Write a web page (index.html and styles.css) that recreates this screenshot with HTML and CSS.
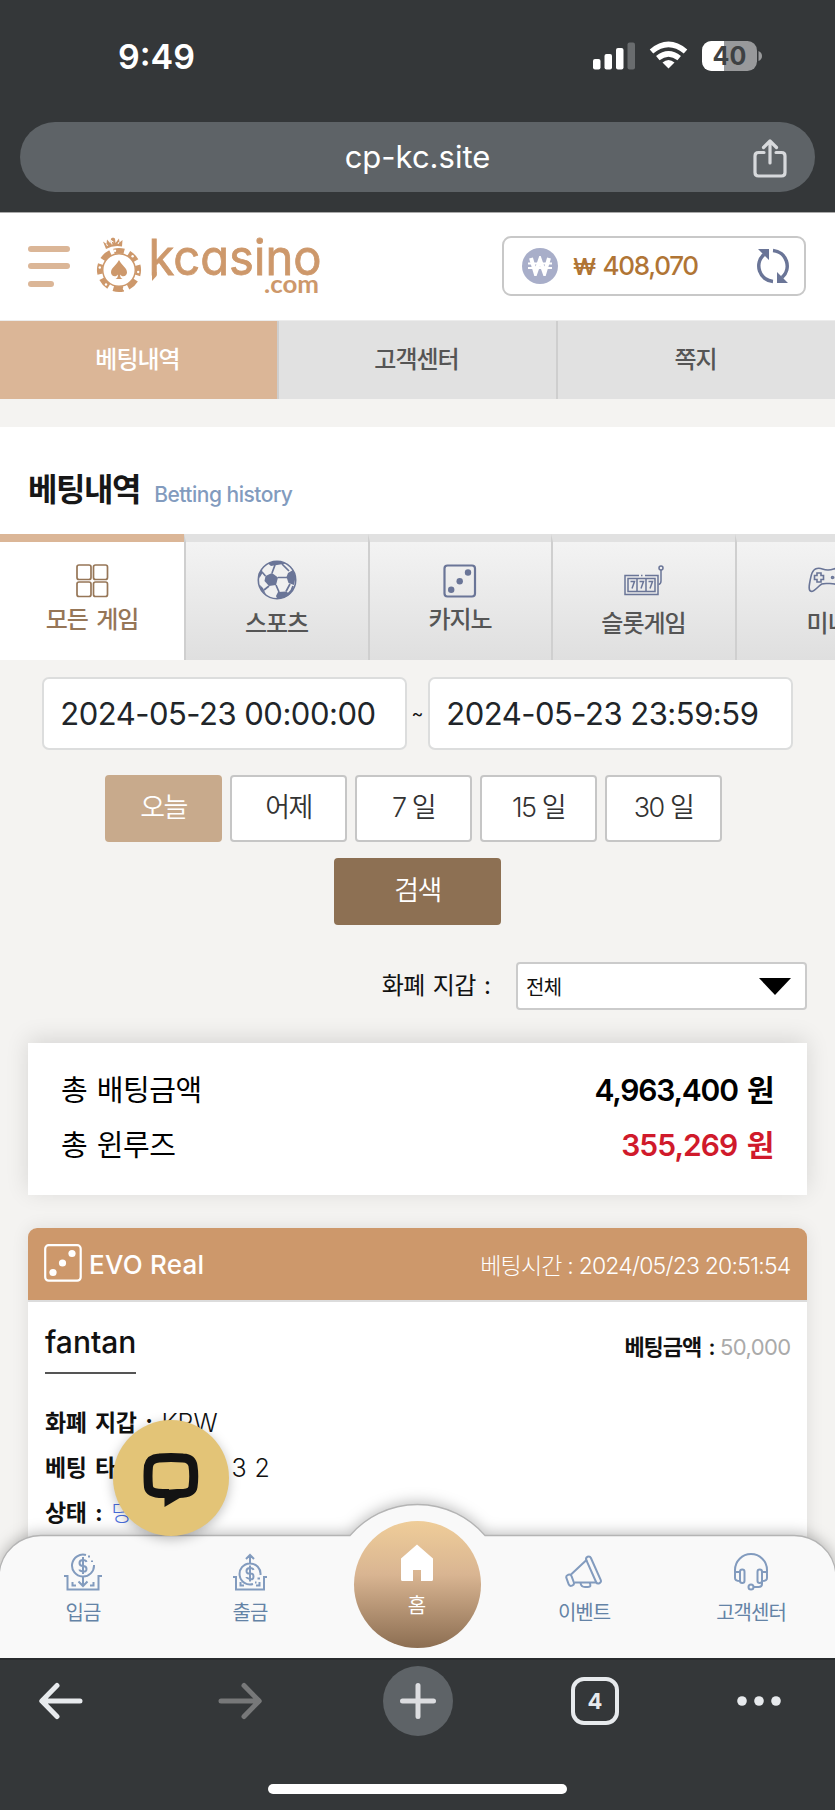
FILE: index.html
```html
<!DOCTYPE html>
<html lang="ko">
<head>
<meta charset="utf-8">
<title>베팅내역</title>
<link rel="stylesheet" href="styles.css">
</head>
<body>
<div class="phone">
  <header class="browser-top">
    <div class="status">
      <span class="clock">9:49</span>
      <svg class="status-icons" width="170" height="32" viewBox="0 0 170 32">
        <g fill="#fff">
          <rect x="0" y="19" width="7.5" height="10.5" rx="2"/><rect x="11.500" y="14" width="7.500" height="15.500" rx="2"/><rect x="23" y="8" width="7.500" height="21.500" rx="2"/>
          <rect x="34.500" y="2.500" width="7.500" height="27" rx="2" fill="#696c6e"/>
        </g>
        <g fill="none" stroke="#fff" stroke-width="5.500"><path d="M58.500 11.500Q75.500-2.700 92.500 11.500"/><path d="M64.800 18.200Q75.500 9.500 86.200 18.200"/></g>
        <path d="M75.500 28.500L69.500 22.500Q75.500 17.500 81.500 22.500Z" fill="#fff"/>
        <rect x="109" y="1" width="55" height="30" rx="9.500" fill="#98999b"/>
        <path d="M131 1H118.500A9.500 9.500 0 0 0 109 10.500V21.500A9.500 9.500 0 0 0 118.500 31H131Z" fill="#fff"/>
        <path d="M165.500 11q3.500 1.500 3.500 5t-3.500 5Z" fill="#98999b"/>
        <text x="136.500" y="25" class="battery-text">40</text>
      </svg>
    </div>
    <div class="address">
      <span>cp-kc.site</span>
      <svg class="share" width="34" height="40" viewBox="0 0 34 40" fill="none" stroke="#d7d9dc" stroke-width="3.200" stroke-linecap="round" stroke-linejoin="round"><path d="M11 13.500H5.500Q2 13.500 2 17V33.500Q2 37 5.500 37H28.500Q32 37 32 33.500V17Q32 13.500 28.500 13.500H23M17 24V2.500M10.500 8.500L17 2L23.500 8.500"/></svg>
    </div>
  </header>

  <main class="screen">
    <div class="site-head">
      <div class="burger"><i></i><i></i><i></i></div>
      <svg class="logo" width="230" height="62" viewBox="0 0 230 62" fill="#cd986b">
        <circle cx="24" cy="33" r="19.300" fill="none" stroke="#cd986b" stroke-width="5.500" stroke-dasharray="10.200 5" transform="rotate(-105 24 33)"/>
        <circle cx="24" cy="33" r="16.300" fill="none" stroke="#cd986b" stroke-width="1.500"/>
        <g fill="#fff"><circle cx="20" cy="13.800" r="1.200"/><circle cx="37.600" cy="19.200" r="1.200"/><circle cx="43.200" cy="35" r="1.200"/><circle cx="29" cy="51.800" r="1.200"/><circle cx="11" cy="47.500" r="1.200"/><circle cx="4.800" cy="30.500" r="1.200"/></g>
        <path d="M24 23C21 29 16 30.500 16 35.500C16 39.500 21 40.500 23 37.500Q23 41 20.500 42H27.500Q25 41 25 37.500C27 40.500 32 39.500 32 35.500C32 30.500 27 29 24 23Z"/>
        <path d="M11 12L8 4.500L11.500 7L12 2.500L15.500 6.500L16 1.500L18 0.500L20 1.500L20.500 6L24 1.500L24.500 5.500L27.500 3L27 9.500Q18 8 11 12Z"/>
        <path d="M12.500 9L11.500 7M17 7.500L16 3.500L18.500 5M23 7L24 5" stroke="#fff" stroke-width="1" fill="none"/>
        <path d="M57 35H61.500V39L57 44Z"/>
        <text x="53.500" y="38" class="word" textLength="173" lengthAdjust="spacingAndGlyphs">kcasino</text>
        <text x="169" y="56" class="dotcom" textLength="55" lengthAdjust="spacingAndGlyphs">.com</text>
      </svg>
      <div class="balance">
        <span class="coin"><svg width="24" height="20" viewBox="0 0 24 20" fill="none" stroke="#fff"><path d="M3 2L7.500 17L12 4L16.500 17L21 2" stroke-width="4"/><path d="M0 7.500H24M0 12H24" stroke-width="2"/></svg></span>
        <span class="amount"><span class="won">₩</span> 408,070</span>
        <svg class="reload" width="34" height="36" viewBox="0 0 34 36"><g fill="none" stroke="#6a7597" stroke-width="3.600"><path d="M17 33.500A15.500 15.500 0 0 1 8 6.500M17 2.500A15.500 15.500 0 0 1 26 29.500"/></g><path d="M2 1H13V12ZM32 35H21V24Z" fill="#6a7597"/></svg>
      </div>
    </div>

    <nav class="tabs"><span class="on">베팅내역</span><span>고객센터</span><span>쪽지</span></nav>

    <div class="title"><h1>베팅내역</h1><span>Betting history</span></div>

    <nav class="games">
      <div class="game on">
        <svg width="33" height="34" viewBox="0 0 33 34" fill="none" stroke="#967657" stroke-width="1.700"><rect x="1" y="1" width="14" height="14.500" rx="2"/><rect x="17.500" y="1" width="14" height="14.500" rx="2"/><rect x="1" y="18" width="14" height="14.500" rx="2"/><rect x="17.500" y="18" width="14" height="14.500" rx="2"/></svg>
        <span>모든 게임</span>
      </div>
      <div class="game sports">
        <svg width="40" height="40" viewBox="0 0 40 40"><circle cx="20" cy="20" r="18.700" fill="#f0f0f0" stroke="#6a7597" stroke-width="1.600"/><g fill="#6a7597"><path d="M8.500 16L15 13L21 17.500L19 25L12 26L7.500 21Z"/><path d="M11 3.500Q20-1 29 3.500L20 5L14 6Z"/><path d="M31 13L36 10L38.500 17L37 25L31.500 23L29.500 17Z"/><path d="M21 32L29 31.500L33 34Q27 39 20 38.500L19 36Z"/><path d="M1.500 14L5 9L5.500 13L2.500 18ZM3 25L6 28L9 34.500L3.500 29Z"/></g><path d="M15 13L18 5M21 17.500H30M19 25L22 32M8.500 16L5 12M12 26L7 30M29 31.500L33 24M25 4L32 11M36 26Q35 31 31 34" fill="none" stroke="#6a7597" stroke-width="1.700"/></svg>
        <span>스포츠</span>
      </div>
      <div class="game">
        <svg width="34" height="34" viewBox="0 0 34 34" fill="#6a7597"><rect x="1.500" y="1.500" width="30.500" height="31" rx="3" fill="none" stroke="#6a7597" stroke-width="2.200"/><circle cx="25" cy="8.500" r="3.200"/><circle cx="16.700" cy="17.200" r="3.200"/><circle cx="8.200" cy="25.700" r="3.200"/></svg>
        <span>카지노</span>
      </div>
      <div class="game slot">
        <svg width="40" height="31" viewBox="0 0 40 31" fill="none" stroke="#6a7597" stroke-width="1.500"><path d="M15 10.500H1V29.500H34V10.500H21M17 10.500H18.500"/><path d="M4 13.500H31V26.500H4ZM13 13.500V26.500M22 13.500V26.500M34.500 19.500Q37 19 37 16V5"/><circle cx="37" cy="3" r="2"/><path d="M6.500 16.500H10.500L8 23.500M15.500 16.500H19.500L17 23.500M24.500 16.500H28.500L26 23.500"/></svg>
        <span>슬롯게임</span>
      </div>
      <div class="game mini">
        <svg width="40" height="27" viewBox="0 0 40 27" fill="none" stroke="#6a7597" stroke-width="1.600"><path d="M9 1.500C14 0.500 14 3 20 3S26 0.500 31 1.500C36 2.500 38 15 39 20S35 26 31 21S26 16.500 20 16.500S14 16 9 21S0 26 1.500 17S4 2.500 9 1.500Z"/><path d="M9 6H13V8.500H15.500V12.500H13V15H9V12.500H6.500V8.500H9Z"/><circle cx="24.500" cy="10.500" r="1"/><circle cx="31" cy="10.500" r="3.500"/></svg>
        <span>미니</span>
      </div>
    </nav>

    <section class="filters">
      <div class="dates"><div class="date">2024-05-23 00:00:00</div><span class="tilde">~</span><div class="date">2024-05-23 23:59:59</div></div>
      <div class="quick"><span class="on">오늘</span><span>어제</span><span>7 일</span><span>15 일</span><span>30 일</span></div>
      <div class="search">검색</div>
      <div class="wallet"><span class="wallet-label">화폐 지갑&nbsp;:</span><div class="select"><span>전체</span><i></i></div></div>
    </section>

    <section class="summary">
      <div class="sum"><span>총 배팅금액</span><b>4,963,400 원</b></div>
      <div class="sum"><span>총 윈루즈</span><b class="red">355,269 원</b></div>
    </section>

    <section class="bet">
      <div class="bet-head">
        <svg width="38" height="38" viewBox="0 0 38 38" fill="#fff"><rect x="1.200" y="1.200" width="35.500" height="35.500" rx="3.500" fill="none" stroke="#fff" stroke-width="2.200"/><circle cx="28" cy="9.500" r="3.600"/><circle cx="18.500" cy="19" r="3.600"/><circle cx="9" cy="28.500" r="3.600"/></svg>
        <span class="vendor">EVO Real</span>
        <span class="when">베팅시간&nbsp;:&nbsp;2024/05/23 20:51:54</span>
      </div>
      <div class="bet-body">
        <div class="bet-top"><span class="name">fantan</span><span class="stake"><b>베팅금액 :</b> 50,000</span></div>
        <div class="line"><b>화폐 지갑 :</b><span class="krw">KRW</span></div>
        <div class="line"><b>베팅 타입 :</b><span class="picks">3 2</span></div>
        <div class="line"><b>상태 :</b><span class="win">당첨</span></div>
      </div>
    </section>

    <nav class="dock">
      <svg class="dock-shape" width="835" height="160" viewBox="0 0 835 160"><path d="M-1 171V76A42 42 0 0 1 42 37.500H350A89 89 0 0 1 485 37.500H793A42 42 0 0 1 836 76V171Z" fill="#f9f9f9" stroke="#b4b4b4" stroke-width="1.300"/></svg>
      <div class="dock-items">
        <div class="dock-item">
          <svg width="38" height="38" viewBox="0 0 38 38" fill="none" stroke="#829bbe" stroke-width="2"><path d="M22 2A11 11 0 1 0 30 12M0 23H3.500V36.500H34.500V23H38M19 23V32M14.500 28.500L19 33L23.500 28.500M8.500 29V32.500H12M29.500 29V32.500H26M24 3.500H26M28 7.500V9"/><path d="M22.500 9Q22 7 19 7Q15.500 7 15.500 10T19 13T22.500 16T19 18.500T15.500 16.500M19 4V21" /></svg>
          <span>입금</span>
        </div>
        <div class="dock-item">
          <svg width="38" height="38" viewBox="0 0 38 38" fill="none" stroke="#829bbe" stroke-width="2"><path d="M22 31A10.500 10.500 0 1 1 29.500 22M2 24H5V36.500H33V24H36M19 11V2M15 6L19 2L23 6M9.500 29V32.500H13M28.500 29V32.500H25M26.500 25.500H29M24 29.500H25.500"/><path d="M22.500 17Q22 15 19 15Q15.500 15 15.500 18T19 20.500T22.500 23.500T19 26T15.500 24M19 12.500V28.500"/></svg>
          <span>출금</span>
        </div>
        <div class="home">
          <svg width="34" height="38" viewBox="0 0 34 38" fill="#fff"><path d="M17 0.500L33 14.500V35.500Q33 37 31.500 37H21V26H13V37H2.500Q1 37 1 35.500V14.500Z"/></svg>
          <span>홈</span>
        </div>
        <div class="dock-item">
          <svg width="38" height="38" viewBox="0 0 38 38" fill="none" stroke="#829bbe" stroke-width="2" stroke-linejoin="round"><rect x="26" y="2.500" width="5" height="29" rx="2.500" transform="rotate(-24 28.500 17)"/><rect x="2.300" y="21.500" width="5.500" height="11.500" rx="2.600" transform="rotate(-20 5 27)"/><path d="M6 21.500L22 6.500M9.500 29.500H31M15.500 30Q16 34 20 34H23Q27 34 24.500 29.500"/></svg>
          <span>이벤트</span>
        </div>
        <div class="dock-item">
          <svg width="38" height="38" viewBox="0 0 38 38" fill="none" stroke="#829bbe" stroke-width="2"><path d="M3 20V17A16 16 0 0 1 35 17V20M30 29V31Q30 34 26.500 34H21M8 19H4Q3 19 3 21V25Q3 28 8 28M30 19H34Q35 19 35 21V25Q35 28 30 28"/><rect x="8" y="16.500" width="4.500" height="13.500" rx="2.200"/><rect x="25.500" y="16.500" width="4.500" height="13.500" rx="2.200"/><circle cx="19" cy="34" r="2.500"/></svg>
          <span>고객센터</span>
        </div>
      </div>
    </nav>

    <div class="chat"><svg width="56" height="56" viewBox="0 0 56 56" fill="none" stroke="#131313" stroke-width="9"><path d="M26 41.500H20Q6.500 41.500 5.500 35Q4.500 24 5.500 14Q7 6.500 16 6Q28 5 40 6Q49 6.500 50 14Q51.500 24 50 35Q49 41.500 36 41.500H35"/><path d="M21.500 38V55L37.500 45.500V37H34Z" fill="#131313" stroke="none"/></svg></div>
  </main>

  <footer class="browser-bottom">
    <div class="tools">
      <svg width="44" height="38" viewBox="0 0 44 38" fill="none" stroke="#e7eaed" stroke-width="5" stroke-linecap="round" stroke-linejoin="round"><path d="M41 19H3M18 3.500L2.800 19L18 34.500"/></svg>
      <svg width="44" height="38" viewBox="0 0 44 38" fill="none" stroke="#777879" stroke-width="5" stroke-linecap="round" stroke-linejoin="round"><path d="M3 19H41M26 3.500L41.200 19L26 34.500"/></svg>
      <span class="plus"><svg width="38" height="38" viewBox="0 0 38 38" stroke="#dcdde0" stroke-width="5" stroke-linecap="round"><path d="M3.500 19H34.500M19 3.500V34.500"/></svg></span>
      <span class="tab-count">4</span>
      <svg width="44" height="12" viewBox="0 0 44 12" fill="#e7eaed"><circle cx="5" cy="6" r="4.800"/><circle cx="22" cy="6" r="4.800"/><circle cx="39" cy="6" r="4.800"/></svg>
    </div>
    <div class="home-bar"></div>
  </footer>
</div>
</body>
</html>
```
FILE: styles.css
```css
* { box-sizing: border-box; }
body { margin: 0; font-family: Inter, "Noto Sans CJK KR", sans-serif; color: #111; }
svg { display: block; flex: none; }
span, b, h1 { white-space: nowrap; }
.phone { width: 835px; height: 1810px; display: flex; flex-direction: column; overflow: hidden; background: #343739; }

/* Browser chrome, top */
.browser-top { height: 212px; padding: 0 20px; background: #343739; }
.status { height: 122px; display: flex; justify-content: space-between; padding: 40px 52px 0 98px; }
.clock { color: #fff; font-size: 34px; font-weight: 600; line-height: 34px; letter-spacing: 0; }
.battery-text { font: 700 25px Inter, sans-serif; text-anchor: middle; fill: #3e4143; }
.address { position: relative; height: 70px; border-radius: 35px; background: #5e6367; display: flex; align-items: center; justify-content: center; color: #fff; font-size: 31px; letter-spacing: 0; padding-bottom: 2px; }
.share { position: absolute; right: 28px; top: 17px; }

/* Site header */
.screen { position: relative; height: 1446px; overflow: hidden; background: #f4f3f1; }
.site-head { height: 108px; background: #fff; border-top: 1px solid #aaa; padding: 0 29px 1px 28px; display: flex; align-items: center; }
.burger { width: 42px; display: grid; gap: 11.500px; }
.burger i { height: 6px; border-radius: 3px; background: #dbb697; }
.burger i:last-child { width: 26px; }
.logo { margin-left: 25px; margin-top: 3px; }
.word { font: 400 49px Inter, sans-serif; font-feature-settings: "cv11"; stroke: #cd986b; stroke-width: .8px; }
.dotcom { font: 700 24px Lato, sans-serif; }
.balance { margin-left: auto; width: 304px; height: 60px; border: 2px solid #c8c8c8; border-radius: 9px; display: flex; align-items: center; padding: 0 14px 0 18px; }
.coin { width: 36px; height: 36px; border-radius: 50%; background: #a8aec9; display: flex; align-items: center; justify-content: center; }
.amount { margin-left: 15px; color: #b07535; font-size: 26px; font-weight: 500; letter-spacing: -1.300px; word-spacing: 2px; padding-bottom: 2px; }
.won { font-size: 23px; font-weight: 600; }
.reload { margin-left: auto; }

.tabs { display: grid; grid-template-columns: 277px 279px 279px; height: 79px; border-top: 1px solid #ececec; background: #e1e1e1; }
.tabs span { display: flex; align-items: center; justify-content: center; font-size: 24px; font-weight: 500; letter-spacing: -1px; color: #555; border-left: 2px solid #cecece; padding: 0 2px 5px 0; }
.tabs .on { background: #dbb697; color: #fff; border: 0; }

.title { margin-top: 28px; height: 107px; background: #fff; padding: 40px 28px 0; display: flex; align-items: baseline; }
.title h1 { margin: 0; font-size: 32px; line-height: 46px; font-weight: 700; letter-spacing: -1.400px; color: #171717; }
.title span { margin-left: 14px; color: #829bbe; font-size: 21px; font-weight: 500; letter-spacing: -.5px; transform: translateY(1px); }

/* Game category strip, runs off the right edge */
.games { height: 126px; display: grid; grid-template-columns: 184px 184px 183px 184px 184px; width: 919px; }
.game { border-top: 8px solid #e1e1e1; border-left: 2px solid #cfcfcf; background: linear-gradient(#f3f3f3, #dfdfdf); display: flex; flex-direction: column; align-items: center; padding: 22px 1px 0 0; color: #555; font-size: 24px; font-weight: 500; letter-spacing: -1px; }
.game.on { background: #fff; border-top-color: #dbb697; border-left: 0; padding-right: 0; color: #967657; word-spacing: 3px; }
.game span { line-height: 32px; margin-top: 6px; }
.game.sports { padding-top: 18px; }
.sports span { margin-top: 8px; }
.game.slot { padding-top: 23px; }
.slot span { margin-top: 12px; }
.game.mini { padding-top: 25px; }
.mini span { margin-top: 14px; }

/* Filters */
.filters { padding: 17px 28px 0; }
.dates { display: flex; justify-content: center; align-items: center; }
.date { width: 364.500px; height: 73px; border: 2px solid #dcdddd; border-radius: 7px; background: #fff; padding: 0 16px; line-height: 70px; font-size: 31px; letter-spacing: -.5px; color: #212529; white-space: nowrap; }
.tilde { width: 21.500px; text-align: center; font-size: 18px; line-height: 20px; color: #111; }
.quick { display: flex; justify-content: center; gap: 8px; margin: 25px 0 0 -8px; }
.quick span { width: 117px; height: 67px; border: 2px solid #c6c6c6; border-radius: 4px; background: #fff; text-align: center; line-height: 61px; font-size: 27px; font-weight: 350; letter-spacing: -1.500px; color: #333; }
.quick .on { background: #c8aa8c; border-color: #c8aa8c; color: #fff; }
.search { width: 167px; height: 67px; margin: 16px auto 0; border-radius: 4px; background: #8d7053; color: #fff; text-align: center; line-height: 65px; font-size: 27px; letter-spacing: -1.500px; font-weight: 350; }
.wallet { display: flex; justify-content: flex-end; align-items: center; margin-top: 37px; }
.wallet-label { font-size: 24px; letter-spacing: -.8px; word-spacing: 2.500px; margin-right: 26px; line-height: 48px; }
.select { width: 291px; height: 48px; border: 2px solid #cbcbcb; border-radius: 4px; background: #fff; display: flex; align-items: center; justify-content: space-between; padding: 0 14px 0 8px; font-size: 20px; letter-spacing: -.6px; }
.select i { border: 16px solid transparent; border-top: 17px solid #000; border-bottom: 0; }

/* Totals */
.summary { margin: 33px 28.500px 0 28px; height: 152px; background: #fff; box-shadow: 0 -4px 22px rgba(0,0,0,.12); padding: 20px 33px; }
.sum { display: flex; justify-content: space-between; height: 55px; line-height: 55px; font-size: 29px; letter-spacing: -.5px; word-spacing: 2px; color: #000; }
.sum b { font-weight: 600; font-size: 30px; letter-spacing: -1.200px; word-spacing: 3px; }
.sum .red { color: #d01a2b; letter-spacing: -.95px; }

/* Bet card */
.bet { margin: 33px 28.500px 0 28px; height: 400px; background: #fff; border-radius: 9px 9px 0 0; box-shadow: 0 0 18px rgba(0,0,0,.09); }
.bet-head { height: 74px; border-radius: 9px 9px 0 0; background: #cd986b; border-bottom: 2px solid #dcdcdc; color: #fff; display: flex; align-items: center; padding: 0 16px 2px; }
.vendor { margin-left: 7px; font-size: 26px; font-weight: 500; letter-spacing: .25px; padding-top: 3px; }
.when { margin-left: auto; font-size: 23px; font-weight: 300; letter-spacing: -.8px; padding-top: 2px; }
.bet-body { padding: 13px 16px 13px 17px; color: #111; }
.bet-top { display: flex; justify-content: space-between; height: 86px; }
.name { height: 59px; line-height: 54px; font-size: 30px; font-weight: 500; border-bottom: 2px solid #555; }
.stake { font-size: 22px; line-height: 64px; letter-spacing: -.6px; color: #aaa; }
.stake b { color: #111; font-weight: 600; letter-spacing: -1.100px; word-spacing: 3px; }
.line { height: 45px; line-height: 45px; display: flex; font-size: 23px; }
.line b { font-weight: 700; letter-spacing: -.4px; word-spacing: 3.500px; }
.krw { margin-left: 9px; font-size: 25px; font-weight: 300; }
.picks { margin-left: 79px; font-size: 25px; font-weight: 300; word-spacing: 1px; }
.win { margin-left: 9px; color: #4b6fe0; font-weight: 300; }

/* Dock, floats over the page */
.dock { position: absolute; left: 0; bottom: 0; width: 835px; height: 160px; }
.dock-shape { position: absolute; inset: 0; overflow: visible; filter: drop-shadow(0 -2px 7px rgba(0,0,0,.25)); }
.dock-items { position: relative; height: 160px; display: grid; grid-template-columns: repeat(5, 167px); justify-items: center; }
.dock-item { display: flex; flex-direction: column; align-items: center; padding: 55px 1px 0 0; color: #6483a6; font-size: 20px; letter-spacing: -1px; }
.dock-item span { margin-top: 9px; line-height: 26px; }
.home { width: 127px; height: 127px; margin-top: 23px; border-radius: 50%; background: linear-gradient(#efcd99, #d9b592 42%, #8c6e52); display: flex; flex-direction: column; align-items: center; padding: 23px 1px 0 0; color: #fff; font-size: 20px; }
.home span { line-height: 26px; margin-top: 11px; }
.chat { position: absolute; left: 113px; top: 1208px; width: 116px; height: 116px; border-radius: 50%; background: #e3c477; box-shadow: 0 3px 12px rgba(0,0,0,.25); display: flex; align-items: center; justify-content: center; padding-top: 3px; }

/* Browser chrome, bottom */
.browser-bottom { height: 152px; display: flex; flex-direction: column; align-items: flex-start; border-top: 2px solid #292c2e; }
.tools { width: 805px; height: 82px; display: grid; grid-template-columns: 122px 236px 119px 236px 92px; justify-items: center; align-items: center; }
.plus { width: 70px; height: 70px; border-radius: 50%; background: #5e6367; display: flex; align-items: center; justify-content: center; }
.tab-count { width: 48px; height: 48px; border: 4px solid #e7eaed; border-radius: 13px; color: #e7eaed; text-align: center; line-height: 40px; font-size: 22px; font-weight: 700; }
.home-bar { width: 299px; height: 10px; border-radius: 5px; background: #fff; margin: 42px auto 0; }
```
